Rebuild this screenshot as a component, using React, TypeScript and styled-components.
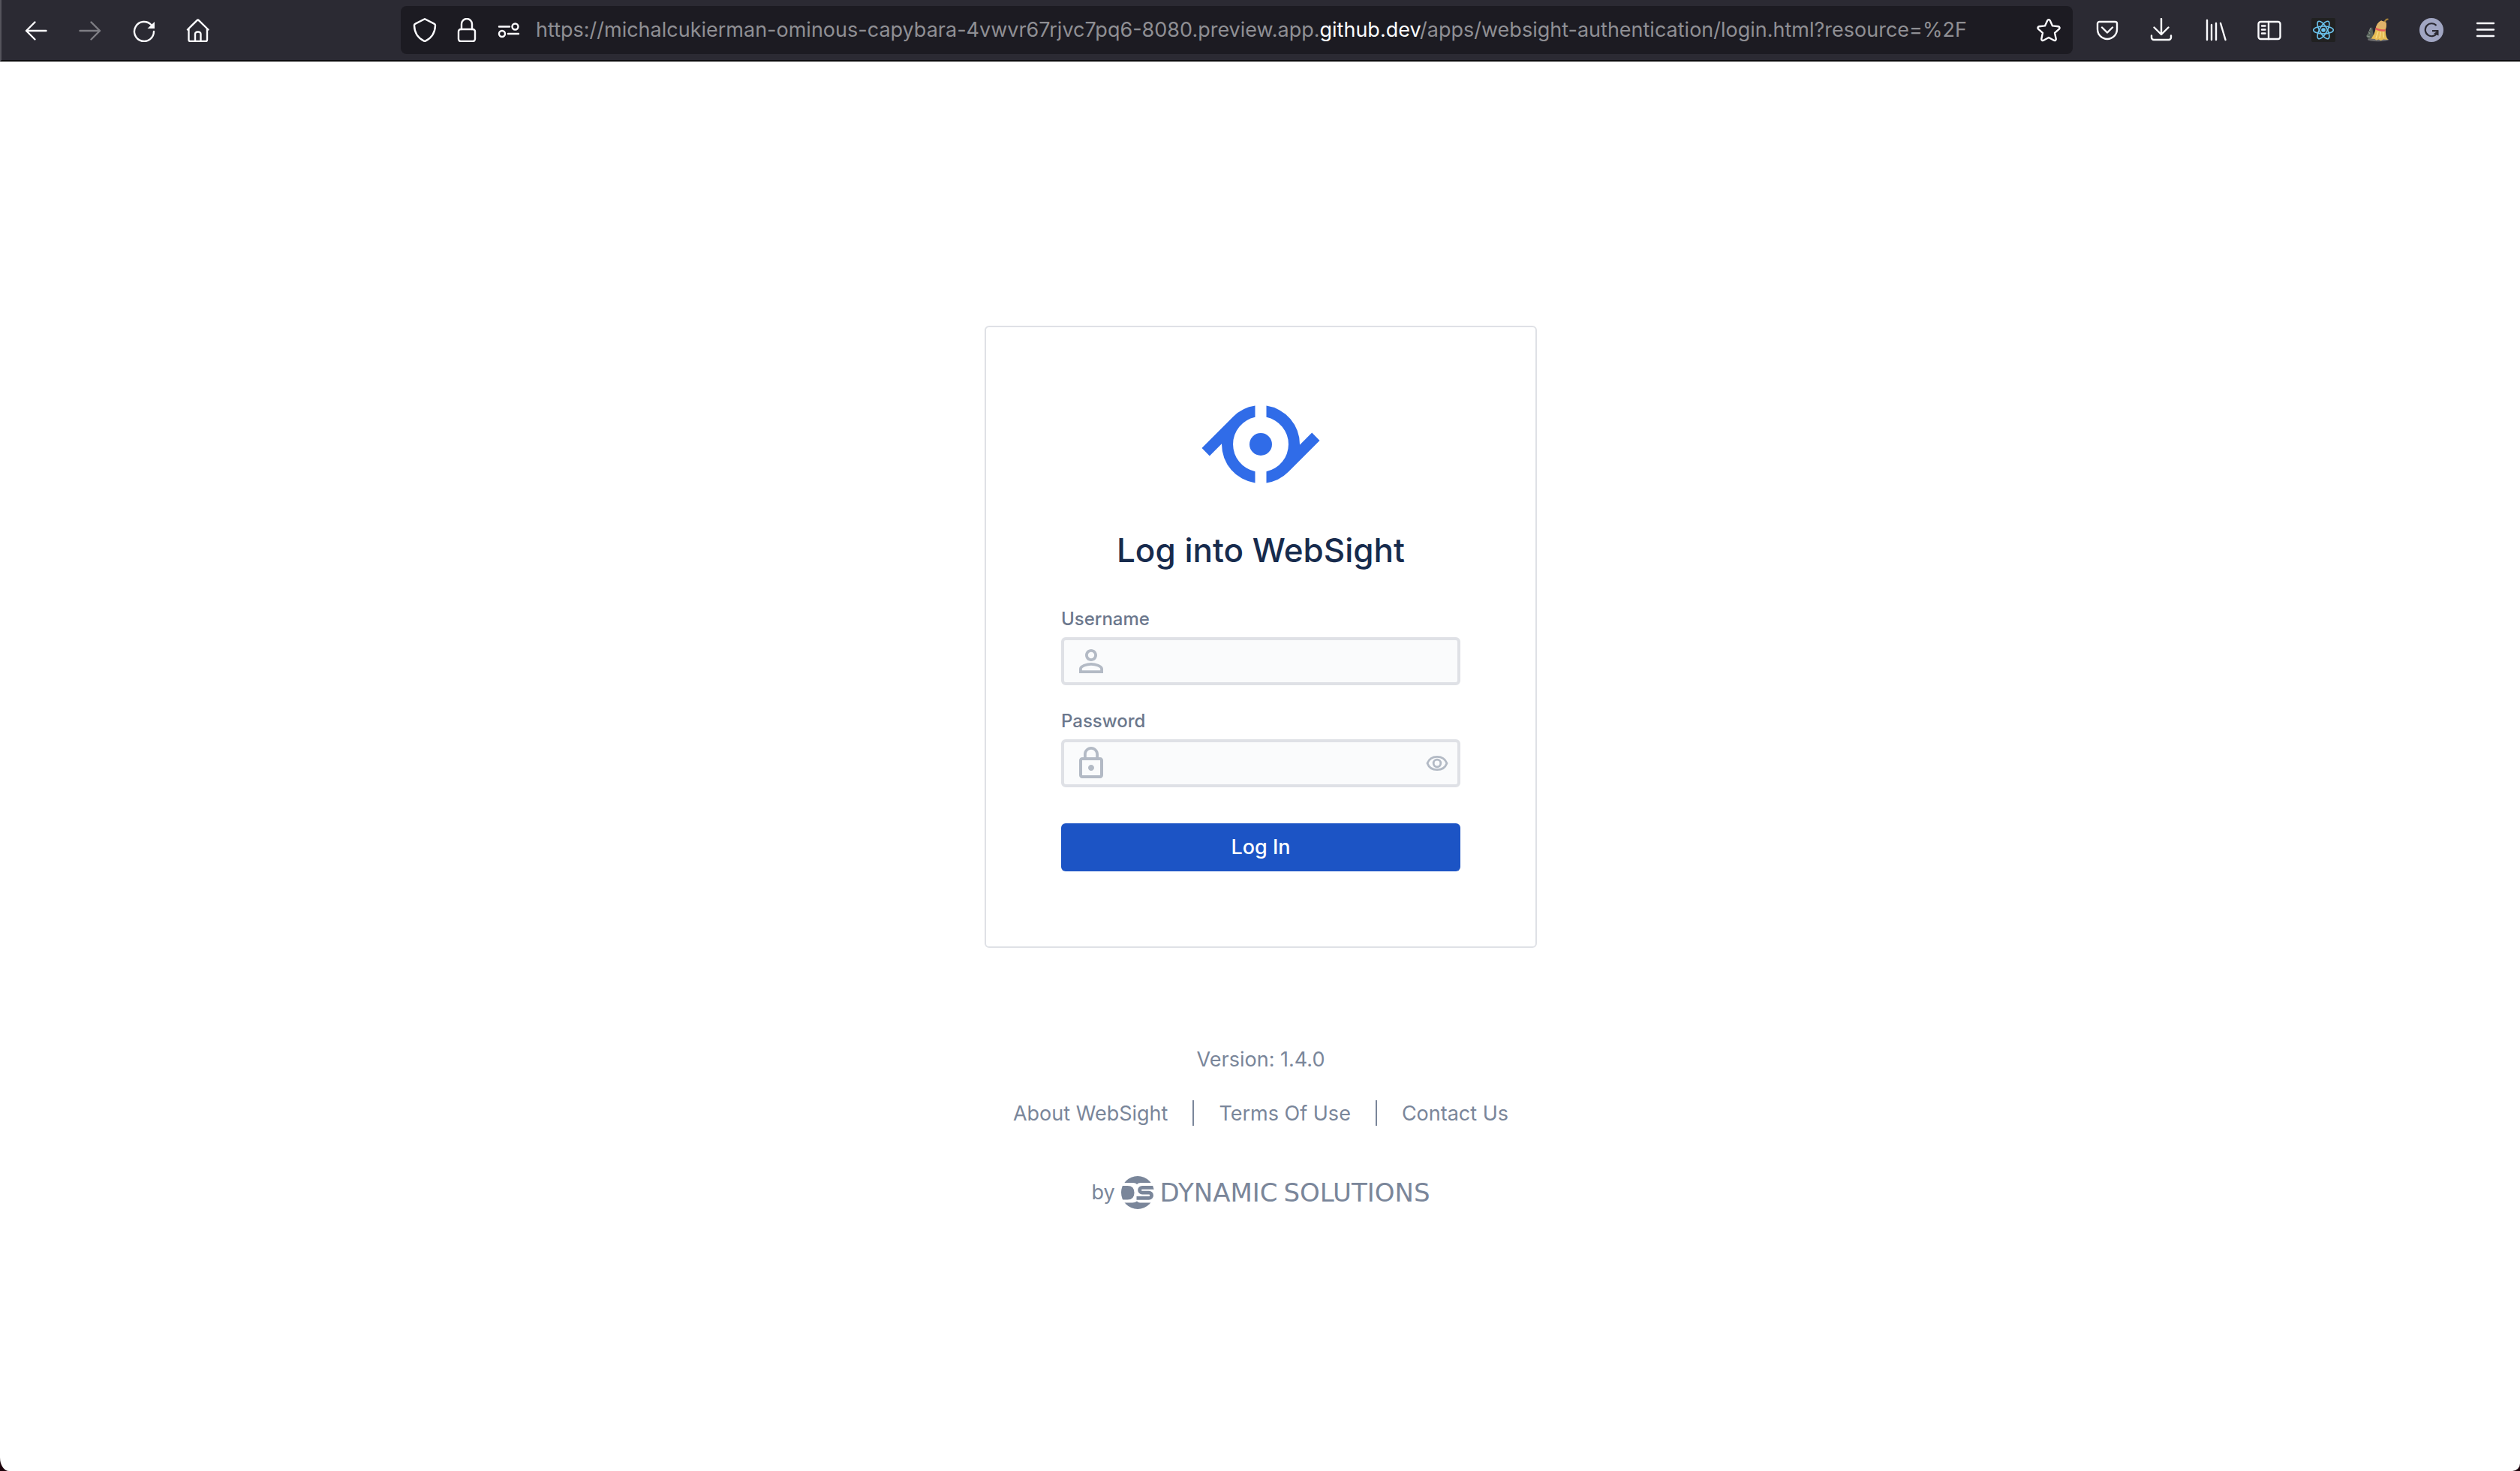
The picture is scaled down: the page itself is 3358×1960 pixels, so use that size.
import React, { useState } from "react";
import styled, { createGlobalStyle } from "styled-components";

const GlobalStyle = createGlobalStyle`
  *, *::before, *::after { box-sizing: border-box; }
  html, body, #root { height: 100%; }
  body {
    margin: 0;
    background: #1d040c;
    font-family: Inter, "Liberation Sans", sans-serif;
  }
`;

const Window = styled.div`
  display: flex;
  flex-direction: column;
  min-height: 100%;
  background: #ffffff;
  border-radius: 0 0 10px 12px / 0 0 10px 18px;
  overflow: hidden;
`;

/* ---------- Browser toolbar ---------- */

const Toolbar = styled.header`
  display: flex;
  align-items: center;
  height: 82px;
  padding: 0 10px;
  background: #2b2a33;
  border-left: 2px solid #55545c;
  border-bottom: 2px solid #0c0c0d;
`;

const ToolGroup = styled.nav`
  display: flex;
`;

const ToolButton = styled.button<{ $dim?: boolean }>`
  display: flex;
  align-items: center;
  justify-content: center;
  width: 72px;
  height: 64px;
  padding: 0;
  border: 0;
  background: none;
  color: #fbfbfe;
  opacity: ${(p) => (p.$dim ? 0.4 : 1)};
`;

const Spacer = styled.div`
  flex: 0 1 234px;
`;

const UrlBar = styled.div`
  display: flex;
  flex: 1;
  align-items: center;
  min-width: 0;
  height: 64px;
  margin-right: 10px;
  padding: 0 4px;
  border-radius: 8px;
  background: #1c1b22;
`;

const UrlButton = styled(ToolButton)`
  width: 56px;
`;

const UrlText = styled.div`
  flex: 1;
  min-width: 0;
  padding-left: 8px;
  overflow: hidden;
  white-space: nowrap;
  font-size: 27px;
  line-height: 40px;
  color: #8f8f94;
`;

const Host = styled.span`
  color: #fbfbfe;
`;

const Glyph = ({ children }: { children: React.ReactNode }) => (
  <svg
    width="32"
    height="32"
    viewBox="0 0 32 32"
    fill="none"
    stroke="currentColor"
    strokeWidth="2.4"
    strokeLinecap="round"
    strokeLinejoin="round"
    aria-hidden="true"
  >
    {children}
  </svg>
);

const BackIcon = () => (
  <Glyph>
    <path d="M29.5 17H3M14.5 5.5 3 17l11.5 11.5" />
  </Glyph>
);
const ForwardIcon = () => (
  <Glyph>
    <path d="M2.5 17H29M17.5 5.5 29 17 17.5 28.5" />
  </Glyph>
);
const ReloadIcon = () => (
  <Glyph>
    <path d="M29 18a13 13 0 1 1-3.6-9" />
    <path d="M30 5v9h-9.500z" fill="currentColor" stroke="none" />
  </Glyph>
);
const HomeIcon = () => (
  <Glyph>
    <path d="M2 15.5 14.3 3.300a2 2 0 0 1 2.800 0L29.500 15.500M3.500 14.500V29a2 2 0 0 0 2 2h20.500a2 2 0 0 0 2-2V14.500M12 31V21.500a3 3 0 0 1 3-3h1.500a3 3 0 0 1 3 3V31" />
  </Glyph>
);
const ShieldIcon = () => (
  <Glyph>
    <path d="M16 1.2 28.5 7.600a2.500 2.500 0 0 1 1.500 2.400c-.3 9-4.500 16.200-12.600 20.400a3 3 0 0 1-2.800 0C6.500 26.200 2.300 19 2 10a2.500 2.500 0 0 1 1.500-2.400z" />
  </Glyph>
);
const LockIcon = () => (
  <Glyph>
    <rect x="5" y="15" width="22" height="16" rx="3" />
    <path d="M9 15V8a7 7 0 0 1 14 0v7" />
  </Glyph>
);
const PermissionsIcon = () => (
  <Glyph>
    <path d="M3 11.5h14M15 21h14" />
    <circle cx="24.5" cy="11.5" r="4" />
    <circle cx="7" cy="21" r="4" />
  </Glyph>
);
const StarIcon = () => (
  <Glyph>
    <path d="M14.300 3.200a1.900 1.900 0 0 1 3.400 0l3.300 7.200 7.900.9a1.900 1.900 0 0 1 1 3.300L24 19.800l1.700 8a1.900 1.900 0 0 1-2.800 2L16 26l-6.900 3.800a1.900 1.900 0 0 1-2.800-2l1.700-8-5.900-5.200a1.900 1.900 0 0 1 1-3.300l7.900-.9z" />
  </Glyph>
);
const PocketIcon = () => (
  <Glyph>
    <path d="M5.500 5h21a2.500 2.500 0 0 1 2.500 2.500V15a13 13 0 0 1-26 0V7.500A2.500 2.500 0 0 1 5.500 5zM9 12.500l7 7 7-7" />
  </Glyph>
);
const DownloadIcon = () => (
  <Glyph>
    <path d="M16 1v20.500M6.500 12.500l9.500 9.500 9.500-9.500M3 23.500V26a3 3 0 0 0 3 3h20a3 3 0 0 0 3-3v-2.500" />
  </Glyph>
);
const LibraryIcon = () => (
  <Glyph>
    <path d="M5 3v26M11 9v20M17 7v22M23 7l6.500 22" />
  </Glyph>
);
const SidebarIcon = () => (
  <Glyph>
    <rect x="1.5" y="5" width="29" height="23" rx="3" />
    <path d="M15 5v23M6 10.500h4.500M6 15.500h4.500M6 20.500h4.500" />
  </Glyph>
);
const MenuIcon = () => (
  <Glyph>
    <path d="M5 7h22M5 15.500h22M5 24h22" />
  </Glyph>
);
const ReactIcon = () => (
  <svg width="32" height="32" viewBox="0 0 32 32" aria-hidden="true">
    <rect width="32" height="32" rx="2" fill="#212121" />
    <g fill="none" stroke="#6cc4ee" strokeWidth="1.6">
      <ellipse cx="16" cy="16" rx="13.3" ry="5" />
      <ellipse cx="16" cy="16" rx="13.3" ry="5" transform="rotate(60 16 16)" />
      <ellipse cx="16" cy="16" rx="13.3" ry="5" transform="rotate(120 16 16)" />
    </g>
    <circle cx="16" cy="16" r="2.8" fill="#6cc4ee" />
  </svg>
);
const BroomIcon = () => (
  <svg width="32" height="32" viewBox="0 0 32 32" aria-hidden="true">
    <ellipse cx="17" cy="28.8" rx="14" ry="2.4" fill="#6a6a6c" />
    <path d="M9 12 1 24l3 4 7-3z" fill="#59655c" />
    <path d="M7 13l-1.500 4M4 18l2 3M2 24l4 1" stroke="#8b968d" strokeWidth="1.2" />
    <path d="M30.500 1.500 28 2l-5 6" fill="none" stroke="#a8843a" strokeWidth="2" />
    <path
      d="M21 3.500c-4 2-6.500 6-7.500 11C12.500 20 11 23 7.500 27.500l5 .5 2 1.500 3-1 3 1.500 3.500-1.500 6 .5c-2.500-4-3.500-8-3-14 1-3 1.500-6 .5-9z"
      fill="#e7bd54"
    />
    <path d="M17 18l-3 9M20.500 18l-1.500 9M23.500 18l1 8" stroke="#f6dd8c" strokeWidth="1.3" />
    <path d="M21 3.500c-4 2-6 5-7 9l12.500 2.500c1-3 1.500-6 1-9z" fill="#e0b36a" />
    <path d="M13.800 12.500c4 2.500 8.500 3.300 13 2.500l-.3 2.500c-5 .8-9.500-.2-13.200-2.500z" fill="#e2595c" />
  </svg>
);
const GrammarIcon = () => (
  <svg width="32" height="32" viewBox="0 0 32 32" fill="none" aria-hidden="true">
    <circle cx="16" cy="16" r="16" fill="#a1a6c3" />
    <path d="M22.500 10a8.500 8.500 0 1 0 .8 10.500M17 17.200h8" stroke="#2b2a33" strokeWidth="2.2" />
    <path d="M25.500 16v7.500l-6.500-2.500z" fill="#2b2a33" />
  </svg>
);

/* ---------- Login page ---------- */

const Page = styled.main`
  display: flex;
  flex: 1;
  flex-direction: column;
  align-items: center;
  justify-content: center;
  padding-top: 2px;
  padding-left: 2px;
`;

const Card = styled.section`
  width: 736px;
  max-width: 100%;
  padding: 100px;
  border: 2px solid #dfe1e6;
  border-radius: 6px;
`;

const ProductLogo = styled.svg`
  display: block;
  width: 160px;
  height: 112px;
  margin: 0 auto;
`;

const Title = styled.h1`
  margin: 57px 0 48px;
  font-size: 44px;
  font-weight: 500;
  line-height: 56px;
  text-align: center;
  white-space: nowrap;
  color: #172b4d;
`;

const Form = styled.form`
  display: flex;
  flex-direction: column;
  gap: 32px;
`;

const Field = styled.div`
  display: flex;
  flex-direction: column;
  gap: 8px;
`;

const Label = styled.label`
  font-size: 24px;
  font-weight: 500;
  line-height: 32px;
  color: #6b778c;
`;

const InputBox = styled.div`
  display: flex;
  align-items: center;
  height: 64px;
  padding: 0 12px;
  border: 4px solid #dfe1e6;
  border-radius: 6px;
  background: #fafbfc;
  color: #b3bac5;
`;

const Input = styled.input`
  flex: 1;
  min-width: 0;
  height: 100%;
  padding: 0 8px;
  border: 0;
  outline: 0;
  background: none;
  font: inherit;
  font-size: 27px;
  color: #172b4d;
`;

const RevealButton = styled.button`
  display: flex;
  padding: 0;
  border: 0;
  background: none;
  color: inherit;
`;

const SubmitButton = styled.button`
  height: 64px;
  margin-top: 16px;
  border: 0;
  border-radius: 6px;
  background: #1c54c5;
  font: inherit;
  font-size: 27px;
  font-weight: 500;
  color: #ffffff;
`;

const Footer = styled.footer`
  display: flex;
  flex-direction: column;
  align-items: center;
  margin-top: 131px;
  font-size: 27px;
  line-height: 36px;
  color: #7a869a;
`;

const Links = styled.nav`
  display: flex;
  gap: 33px;
  margin: 36px 0 65px;
`;

const FooterLink = styled.a`
  color: inherit;
  text-decoration: none;
`;

const Divider = styled.span`
  width: 2px;
  height: 34px;
  background: #7a869a;
`;

const Brand = styled.div`
  display: flex;
  align-items: center;
  gap: 8px;
`;

const BrandWord = styled.span`
  font-family: "DejaVu Sans", sans-serif;
  font-size: 34px;
`;

const PersonIcon = () => (
  <svg width="48" height="48" viewBox="0 0 24 24" fill="currentColor" aria-hidden="true">
    <path d="M12 5.900a2.100 2.100 0 1 1 0 4.200 2.100 2.100 0 0 1 0-4.200m0 9c2.970 0 6.100 1.460 6.100 2.100v1.100H5.900V17c0-.64 3.130-2.100 6.100-2.100M12 4C9.790 4 8 5.790 8 8s1.790 4 4 4 4-1.790 4-4-1.790-4-4-4zm0 9c-2.670 0-8 1.340-8 4v3h16v-3c0-2.660-5.330-4-8-4z" />
  </svg>
);

const PadlockIcon = () => (
  <svg width="48" height="48" viewBox="0 0 24 24" fill="currentColor" aria-hidden="true">
    <path d="M12 17c1.100 0 2-.9 2-2s-.9-2-2-2-2 .9-2 2 .9 2 2 2zm6-9h-1V6c0-2.760-2.240-5-5-5S7 3.240 7 6v2H6c-1.100 0-2 .9-2 2v10c0 1.100.9 2 2 2h12c1.100 0 2-.9 2-2V10c0-1.100-.9-2-2-2zM8.900 6c0-1.710 1.390-3.100 3.100-3.100s3.100 1.390 3.100 3.100v2H8.900V6zM18 20H6V10h12v10z" />
  </svg>
);

const EyeIcon = () => (
  <svg width="30" height="32" viewBox="0 0 30 32" fill="none" stroke="currentColor" strokeWidth="2.8" aria-hidden="true">
    <path d="M2 16C4 10.500 9 7.300 15 7.300s11 3.200 13 8.700c-2 5.500-7 8.700-13 8.700S4 21.500 2 16z" />
    <circle cx="15" cy="16" r="4.800" />
  </svg>
);

const WebSightLogo = () => (
  <ProductLogo viewBox="0 0 160 112" fill="#306ce8" role="img" aria-label="WebSight">
    <path d="M72.500 4.550A52 52 0 0 0 43.230 19.230L1.500 61l10.300 10.400L28 55.200V56a52 52 0 0 0 44.500 51.450V92.220a37 37 0 0 1 0-72.440z" />
    <path d="M87.500 107.450a52 52 0 0 0 29.270-14.680L158.500 51l-10.300-10.400L132 56.800V56A52 52 0 0 0 87.500 4.550v15.230a37 37 0 0 1 0 72.440z" />
    <circle cx="80" cy="56" r="15" />
  </ProductLogo>
);

const DynamicSolutionsMark = () => (
  <svg width="44" height="44" viewBox="0 0 44 44" aria-hidden="true">
    <defs>
      <clipPath id="disc">
        <circle cx="22" cy="22" r="22" />
      </clipPath>
    </defs>
    <g clipPath="url(#disc)" fill="#7a869a">
      <path d="M0 0h44v9H26q-3.500 0-5 2-1.500-2-5-2H0zM0 35.500h15q4 0 6-2 1.500 2 4 2h19V44H0z" />
      <path d="M0 13h8.500q9 0 9 9.200 0 9.300-9 9.300H0z" />
      <path
        d="M46 15.300H28a3.400 3.400 0 0 0 0 6.800H37a3.400 3.400 0 0 1 0 7.200H20.500"
        fill="none"
        stroke="#7a869a"
        strokeWidth="4.800"
      />
    </g>
  </svg>
);

export default function App() {
  const [revealed, setRevealed] = useState(false);

  return (
    <>
      <GlobalStyle />
      <Window>
        <Toolbar>
          <ToolGroup aria-label="Navigation">
            <ToolButton aria-label="Back"><BackIcon /></ToolButton>
            <ToolButton aria-label="Forward" $dim><ForwardIcon /></ToolButton>
            <ToolButton aria-label="Reload"><ReloadIcon /></ToolButton>
            <ToolButton aria-label="Home"><HomeIcon /></ToolButton>
          </ToolGroup>
          <Spacer />
          <UrlBar>
            <UrlButton aria-label="Tracking protection"><ShieldIcon /></UrlButton>
            <UrlButton aria-label="Connection security"><LockIcon /></UrlButton>
            <UrlButton aria-label="Permissions"><PermissionsIcon /></UrlButton>
            <UrlText>
              https://michalcukierman-ominous-capybara-4vwvr67rjvc7pq6-8080.preview.app.
              <Host>github.dev</Host>
              /apps/websight-authentication/login.html?resource=%2F
            </UrlText>
            <UrlButton aria-label="Bookmark"><StarIcon /></UrlButton>
          </UrlBar>
          <ToolGroup aria-label="Tools">
            <ToolButton aria-label="Pocket"><PocketIcon /></ToolButton>
            <ToolButton aria-label="Downloads"><DownloadIcon /></ToolButton>
            <ToolButton aria-label="Library"><LibraryIcon /></ToolButton>
            <ToolButton aria-label="Sidebars"><SidebarIcon /></ToolButton>
            <ToolButton aria-label="React tools"><ReactIcon /></ToolButton>
            <ToolButton aria-label="Cleaner"><BroomIcon /></ToolButton>
            <ToolButton aria-label="Grammar"><GrammarIcon /></ToolButton>
            <ToolButton aria-label="Menu"><MenuIcon /></ToolButton>
          </ToolGroup>
        </Toolbar>

        <Page>
          <Card>
            <WebSightLogo />
            <Title>Log into WebSight</Title>
            <Form onSubmit={(e) => e.preventDefault()}>
              <Field>
                <Label htmlFor="username">Username</Label>
                <InputBox>
                  <PersonIcon />
                  <Input id="username" type="text" />
                </InputBox>
              </Field>
              <Field>
                <Label htmlFor="password">Password</Label>
                <InputBox>
                  <PadlockIcon />
                  <Input id="password" type={revealed ? "text" : "password"} />
                  <RevealButton type="button" aria-label="Show password" onClick={() => setRevealed(!revealed)}>
                    <EyeIcon />
                  </RevealButton>
                </InputBox>
              </Field>
              <SubmitButton type="submit">Log In</SubmitButton>
            </Form>
          </Card>

          <Footer>
            <span>Version: 1.4.0</span>
            <Links aria-label="Footer">
              <FooterLink href="#about">About WebSight</FooterLink>
              <Divider />
              <FooterLink href="#terms">Terms Of Use</FooterLink>
              <Divider />
              <FooterLink href="#contact">Contact Us</FooterLink>
            </Links>
            <Brand>
              <span>by</span>
              <DynamicSolutionsMark />
              <BrandWord>DYNAMIC</BrandWord>
              <BrandWord>SOLUTIONS</BrandWord>
            </Brand>
          </Footer>
        </Page>
      </Window>
    </>
  );
}
